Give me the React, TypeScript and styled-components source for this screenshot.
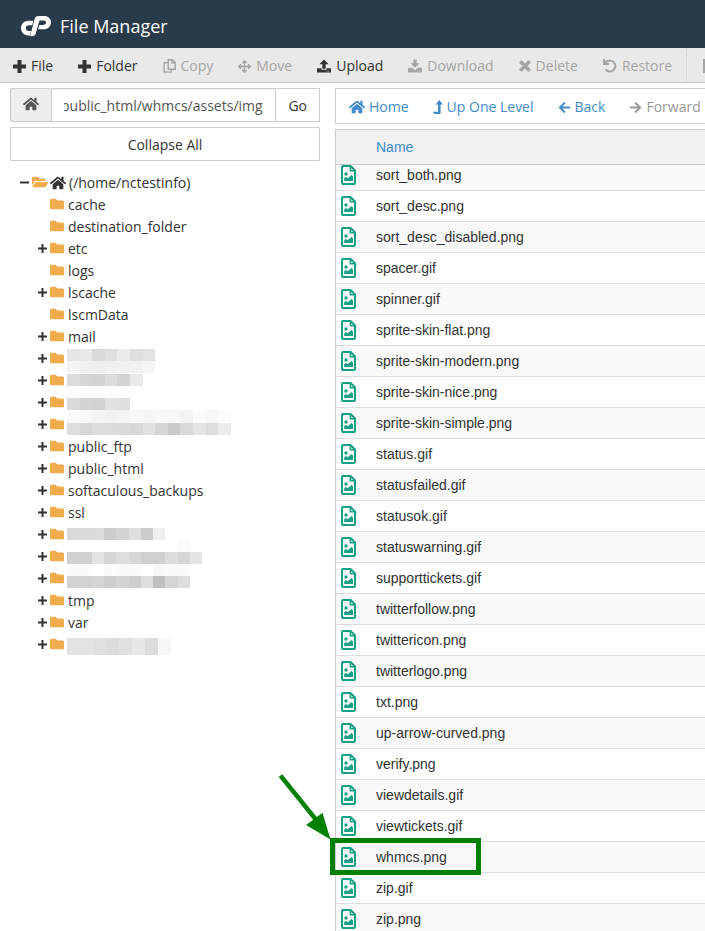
import React, { useEffect, useRef } from "react";
import styled, { createGlobalStyle } from "styled-components";
import {
  FaArrowLeft,
  FaArrowRight,
  FaArrowsAlt,
  FaFolder,
  FaFolderOpen,
  FaHome,
} from "react-icons/fa";

const GlobalStyle = createGlobalStyle`
  *, *::before, *::after { box-sizing: border-box; }
  html, body { margin: 0; background: #fff; }
  body {
    color: #333;
    font: 14px/20px "Open Sans", sans-serif;
    overflow: hidden;
  }
  button, input { font: inherit; color: inherit; margin: 0; }
  a { color: inherit; text-decoration: none; }
`;

const TopBar = styled.header`
  display: flex;
  align-items: center;
  gap: 8px;
  height: 48px;
  padding: 4px 20px 0;
  background: #293a4a;
  color: #fff;
`;

const Title = styled.h1`
  margin: 0;
  font-size: 18px;
  line-height: 24px;
  font-weight: 400;
`;

const Toolbar = styled.nav`
  display: flex;
  height: 35px;
  padding-left: 2px;
  overflow: hidden;
  background: #e9e9e9;
  border-bottom: 1px solid #bfc5ca;
`;

const ToolButton = styled.button<{ $divided?: boolean }>`
  display: flex;
  flex: none;
  align-items: center;
  gap: 5px;
  margin-right: ${(p) => (p.$divided ? 5 : 0)}px;
  padding: 2px 14px 0 11px;
  border: 0;
  border-right: ${(p) => (p.$divided ? "1px dotted #ccc" : "0")};
  background: none;
  white-space: nowrap;
  &:disabled { color: #a5a5a5; }
`;

const Main = styled.main`
  display: flex;
  align-items: flex-start;
  gap: 15px;
  padding: 5px 0 0 10px;
`;

const Sidebar = styled.aside`
  flex: none;
  width: 310px;
`;

const PathForm = styled.form`
  display: flex;
  height: 34px;
`;

const PathHome = styled.button`
  width: 41px;
  padding: 2px 0 0;
  border: 1px solid #ccc;
  border-right: 0;
  border-radius: 3px 0 0 3px;
  background: #eee;
  color: #555;
`;

const PathInput = styled.input`
  flex: 1;
  min-width: 0;
  padding: 5px 12px 3px;
  border: 1px solid #ccc;
  border-radius: 0;
  background: #fff;
  box-shadow: inset 0 1px 1px rgba(0, 0, 0, 0.075);
  && { color: #555; }
`;

const PlainButton = styled.button`
  padding: 6px 12px 4px;
  border: 1px solid #ccc;
  border-radius: 1px;
  background: #fff;
`;

const GoButton = styled(PlainButton)`
  border-left: 0;
`;

const CollapseButton = styled(PlainButton)`
  width: 100%;
  height: 34px;
  margin-top: 5px;
`;

const Tree = styled.ul`
  margin: 11px 0 0;
  padding: 0 0 0 9px;
  list-style: none;
`;

const Branch = styled.ul`
  margin: 0;
  padding: 0 0 0 18px;
  list-style: none;
`;

const TreeRow = styled.div`
  display: flex;
  align-items: center;
  gap: 3px;
  height: 22px;
`;

const Toggle = styled.button`
  display: flex;
  flex: none;
  width: 10px;
  padding: 0 0 2px;
  border: 0;
  background: none;
`;

const ToggleSpace = styled.span`
  flex: none;
  width: 10px;
`;

const FolderMark = styled.span`
  display: flex;
  flex: none;
  padding-bottom: 2px;
  color: #f0ad4e;
`;

const FolderLink = styled.a`
  padding-left: 1px;
`;

const HomeLink = styled.a`
  display: flex;
  align-items: center;
  gap: 3px;
  margin-left: -1px;
`;

const Redaction = styled.svg`
  display: block;
  overflow: visible;
`;

const Content = styled.section`
  flex: 1;
  min-width: 0;
`;

const NavBar = styled.nav`
  display: flex;
  height: 36px;
  padding-left: 1px;
  overflow: hidden;
  border: 1px solid #ccc;
  border-right: 0;
`;

const NavButton = styled.button`
  display: flex;
  flex: none;
  align-items: center;
  gap: 4px;
  padding: 2px 12px 0;
  border: 0;
  background: none;
  white-space: nowrap;
  && { color: #428bca; }
  &&:disabled { color: #999; }
`;

const FileTable = styled.table`
  width: 100%;
  margin-top: 5px;
  border-collapse: separate;
  border-spacing: 0;
  border: 1px solid #ccc;
  border-width: 1px 0 0 1px;
  font-family: "Liberation Sans", Arial, sans-serif;
`;

const HeadCell = styled.th`
  height: 35px;
  padding: 0;
  border-bottom: 1px solid #ccc;
  background: #f1f1f1;
  color: #428bca;
  font-weight: 400;
  text-align: left;
`;

const FileRow = styled.tr<{ $first: boolean }>`
  height: ${(p) => (p.$first ? 26 : 31)}px;
  vertical-align: ${(p) => (p.$first ? "top" : "middle")};
  &:nth-child(odd) { background: #f9f9f9; }
`;

const NameCell = styled.td`
  padding: 0;
  border-bottom: 1px solid #ddd;
`;

const IconCell = styled(NameCell)`
  position: relative;
  width: 40px;
  padding-left: 5px;
  color: #16a085;
  svg { display: block; }
`;

const Highlight = styled.span`
  position: absolute;
  left: -6px;
  top: -4px;
  width: 151px;
  height: 37px;
  border: 5px solid #008000;
`;

const Pointer = styled.svg`
  position: absolute;
  left: -60px;
  top: -70px;
  pointer-events: none;
`;

const Logo = () => (
  <svg width="32" height="22" viewBox="0 0 32 22" fill="#fff" aria-label="cPanel">
    <path d="M13.200 5.800H8.500C4.200 5.800 1 8.900 1 13.100c0 4.200 3 7.400 7 7.400h1.200c.5 0 .8-.2.900-.6l1-4H8.600c-1.700 0-2.800-1.100-2.800-2.700 0-1.700 1.200-2.900 2.900-2.900h3c.4 0 .6-.2.700-.5Z" />
    <path d="M10.100 21.200 14.500 4.300C15.100 2.100 16.500 1 18.600 1H24c4.100 0 7 2.600 7 6.200 0 4.100-3.100 7.100-7.200 7.100h-5.600l.9-3.700c.1-.4.400-.7.900-.7h3.300c1.600 0 2.700-1 2.700-2.300 0-1.200-.9-2-2.400-2H20c-.4 0-.7.200-.8.600L15.900 18c-.6 2.200-1.900 3.200-4 3.200Z" />
  </svg>
);

const BoldPlusIcon = () => (
  <svg width="13" height="13" viewBox="0 0 13 13" fill="none" stroke="currentColor" strokeWidth="4">
    <path d="M6.500 0v13M0 6.500h13" />
  </svg>
);

const UploadIcon = () => (
  <svg width="14" height="14" viewBox="0 0 15 14" fill="currentColor">
    <path d="M7.500 0 12.500 5H9.300v5H5.700V5H2.500ZM0 9.500h4.800V11h5.400V9.500H15V14H0Zm10 2.500v1h1v-1Zm2 0v1h1v-1Z" fillRule="evenodd" />
  </svg>
);

const DownloadIcon = () => (
  <svg width="14" height="14" viewBox="0 0 15 14" fill="currentColor">
    <path d="M5.700 0h3.600v4h3.200L7.500 9 2.500 4h3.200ZM0 9h4.500L7 11.300h1L10.500 9H15v5H0Zm10 3v1h1v-1Zm2 0v1h1v-1Z" fillRule="evenodd" />
  </svg>
);

const CrossIcon = () => (
  <svg width="12" height="12" viewBox="0 0 12 12" fill="none" stroke="currentColor" strokeWidth="3.600">
    <path d="M1.300 1.300 10.700 10.700M10.700 1.300 1.300 10.700" />
  </svg>
);

const RestoreIcon = () => (
  <svg width="14" height="14" viewBox="0 0 14 14" fill="none" stroke="currentColor" strokeWidth="2">
    <path d="M1 0v5h5M1.500 4.500C2.800 2.500 4.700 1.500 7 1.500a5.500 5.500 0 1 1-4.500 9" />
  </svg>
);

const CopyIcon = () => (
  <svg width="13" height="14" viewBox="0 0 13 14" fill="none" stroke="currentColor" strokeWidth="1.400">
    <path d="M5.200 .7h4.300l2.800 2.800v6.800H5.200ZM9 .7v3.300h3.300M5.200 3.700H1.200v9.400h7v-2.800" />
  </svg>
);

const RenameIcon = () => (
  <svg width="12" height="14" viewBox="0 0 12 14" fill="currentColor">
    <path d="M0 0h8v4h4v10H0ZM9 0l3 3H9Z" />
  </svg>
);

const LevelUpIcon = () => (
  <svg width="10" height="14" viewBox="0 0 10 14" fill="currentColor">
    <path d="M6.300 0 10 4.600H7.600V13c0 .6-.4 1-1 1H1.200L0 11.700h5V4.600H2.600Z" />
  </svg>
);

const ExpandIcon = () => (
  <svg width="10" height="10" viewBox="0 0 10 10" fill="none" stroke="currentColor" strokeWidth="2">
    <path d="M5.500 1v9M1 5.500h9" />
  </svg>
);

const CollapseIcon = () => (
  <svg width="10" height="10" viewBox="0 0 10 10" fill="none" stroke="currentColor" strokeWidth="2">
    <path d="M1 5.500h9" />
  </svg>
);

const ImageFileIcon = () => (
  <svg width="15" height="20" viewBox="0 0 15 20" fill="currentColor">
    <path d="M2 1h7.600L14 5.500V18a1 1 0 0 1-1 1H2a1 1 0 0 1-1-1V2a1 1 0 0 1 1-1Z" fill="none" stroke="currentColor" strokeWidth="2" />
    <path d="M8.600 1.500h1.600v3.400h3.300v1.600H8.600Z" />
    <circle cx="5" cy="9" r="1.700" />
    <path d="M3.200 16v-2.700l1.600-1.300 1.900 1.300L10.500 10l1.500 1.400V16Z" />
  </svg>
);

type Band = { y: number; height?: number; shades: string[] };

const Mosaic = ({ cell = 12.3, bands }: { cell?: number; bands: Band[] }) => (
  <Redaction width="164" height="22" viewBox="0 0 164 22" shapeRendering="crispEdges" aria-hidden="true">
    {bands.map((band) =>
      band.shades.map((shade, i) => (
        <rect key={`${band.y}-${i}`} x={i * cell} y={band.y} width={cell} height={band.height ?? 12} fill={`#${shade.repeat(3)}`} />
      ))
    )}
  </Redaction>
);

type Folder = { name?: string; open?: boolean; cell?: number; bands?: Band[] };

const shades = (list: string) => list.split(" ");

const folders: Folder[] = [
  { name: "cache" },
  { name: "destination_folder" },
  { name: "etc", open: true },
  { name: "logs" },
  { name: "lscache", open: true },
  { name: "lscmData" },
  { name: "mail", open: true },
  { open: true, cell: 12.6, bands: [{ y: 1, shades: shades("e6 e8 da df eb df e3") }, { y: 13, shades: shades("f4 f0 ee f0 f0 f1 f5") }] },
  { open: true, cell: 12.6, bands: [{ y: 4, shades: shades("dc d5 d3 dc d4 ea") }] },
  { open: true, cell: 12.6, bands: [{ y: 6, shades: shades("db d4 d3 e1 df") }] },
  { open: true, cell: 12.6, bands: [{ y: -4, height: 13, shades: shades("fa f8 f4 f2 f4 f8 f5 f8 f8 f3 fb f8 fc") }, { y: 9, shades: shades("de d7 dc dc da d8 e1 d5 ca d9 e4 dd ec") }] },
  { name: "public_ftp", open: true },
  { name: "public_html", open: true },
  { name: "softaculous_backups", open: true },
  { name: "ssl", open: true },
  { open: true, bands: [{ y: 4, shades: shades("d9 db dc cd d3 df cd ef") }] },
  { open: true, bands: [{ y: -6, shades: shades("ff ff ff ff ff ff ff ff ff fb") }, { y: 6, shades: shades("d0 d0 e4 d6 de d7 d0 d0 dc d5 e5") }] },
  { open: true, bands: [{ y: -4, shades: shades("fb fb ff fb fa fb ff f8 fa fa") }, { y: 8, shades: shades("d2 d2 d5 ce d4 ce dd bf d5 dd") }] },
  { name: "tmp", open: true },
  { name: "var", open: true },
  { open: true, cell: 13, bands: [{ y: 4, height: 17, shades: shades("e3 e3 e0 db e0 e7 dc f7") }] },
];

const files = [
  "sort_both.png", "sort_desc.png", "sort_desc_disabled.png", "spacer.gif", "spinner.gif",
  "sprite-skin-flat.png", "sprite-skin-modern.png", "sprite-skin-nice.png", "sprite-skin-simple.png",
  "status.gif", "statusfailed.gif", "statusok.gif", "statuswarning.gif", "supporttickets.gif",
  "twitterfollow.png", "twittericon.png", "twitterlogo.png", "txt.png", "up-arrow-curved.png",
  "verify.png", "viewdetails.gif", "viewtickets.gif", "whmcs.png", "zip.gif", "zip.png",
];

const tools = [
  { label: "File", icon: <BoldPlusIcon />, enabled: true },
  { label: "Folder", icon: <BoldPlusIcon />, enabled: true },
  { label: "Copy", icon: <CopyIcon /> },
  { label: "Move", icon: <FaArrowsAlt size={13} /> },
  { label: "Upload", icon: <UploadIcon />, enabled: true },
  { label: "Download", icon: <DownloadIcon /> },
  { label: "Delete", icon: <CrossIcon /> },
  { label: "Restore", icon: <RestoreIcon />, divided: true },
];

export default function App() {
  const pathRef = useRef<HTMLInputElement>(null);
  useEffect(() => {
    if (pathRef.current) pathRef.current.scrollLeft = pathRef.current.scrollWidth;
  }, []);

  return (
    <>
      <GlobalStyle />
      <TopBar>
        <Logo />
        <Title>File Manager</Title>
      </TopBar>
      <Toolbar>
        {tools.map((tool) => (
          <ToolButton key={tool.label} disabled={!tool.enabled} $divided={tool.divided}>
            {tool.icon}
            {tool.label}
          </ToolButton>
        ))}
        <ToolButton disabled aria-label="Rename"><RenameIcon /></ToolButton>
      </Toolbar>
      <Main>
        <Sidebar>
          <PathForm onSubmit={(e) => e.preventDefault()}>
            <PathHome type="button" aria-label="Home directory"><FaHome size={16} /></PathHome>
            <PathInput ref={pathRef} aria-label="Path" defaultValue="public_html/whmcs/assets/img" />
            <GoButton>Go</GoButton>
          </PathForm>
          <CollapseButton>Collapse All</CollapseButton>
          <Tree>
            <li>
              <TreeRow>
                <Toggle aria-label="Collapse"><CollapseIcon /></Toggle>
                <FolderMark><FaFolderOpen size={16} /></FolderMark>
                <HomeLink href="#home"><FaHome size={16} />(/home/nctestinfo)</HomeLink>
              </TreeRow>
              <Branch>
                {folders.map((folder, i) => (
                  <li key={i}>
                    <TreeRow>
                      {folder.open ? <Toggle aria-label="Expand"><ExpandIcon /></Toggle> : <ToggleSpace />}
                      <FolderMark><FaFolder size={14} /></FolderMark>
                      {folder.bands ? (
                        <Mosaic cell={folder.cell} bands={folder.bands} />
                      ) : (
                        <FolderLink href={`#${folder.name}`}>{folder.name}</FolderLink>
                      )}
                    </TreeRow>
                  </li>
                ))}
              </Branch>
            </li>
          </Tree>
        </Sidebar>
        <Content>
          <NavBar>
            <NavButton><FaHome size={16} />Home</NavButton>
            <NavButton><LevelUpIcon />Up One Level</NavButton>
            <NavButton><FaArrowLeft size={13} />Back</NavButton>
            <NavButton disabled><FaArrowRight size={13} />Forward</NavButton>
          </NavBar>
          <FileTable>
            <thead>
              <tr>
                <HeadCell aria-label="Type" />
                <HeadCell>Name</HeadCell>
              </tr>
            </thead>
            <tbody>
              {files.map((file, i) => (
                <FileRow key={file} $first={i === 0}>
                  <IconCell>
                    <ImageFileIcon />
                    {file === "whmcs.png" && (
                      <>
                        <Highlight />
                        <Pointer width="60" height="70" viewBox="0 0 60 70" fill="#008000">
                          <path d="M2.700 5 6.300 2.200 40.800 45 46.500 40.700 54.500 67.500 30 53 37.200 47.800Z" />
                        </Pointer>
                      </>
                    )}
                  </IconCell>
                  <NameCell>{file}</NameCell>
                </FileRow>
              ))}
            </tbody>
          </FileTable>
        </Content>
      </Main>
    </>
  );
}
